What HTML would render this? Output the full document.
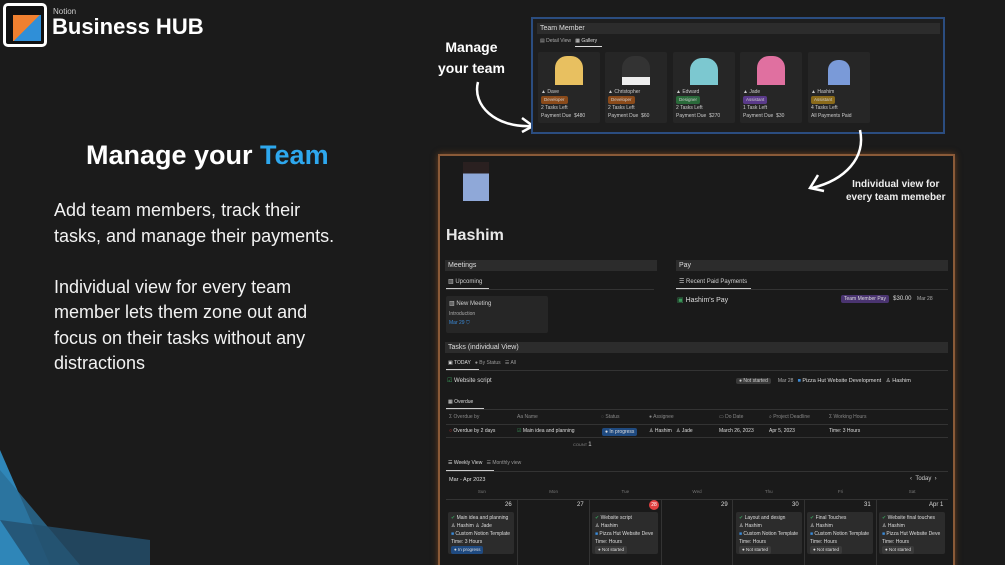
<!DOCTYPE html>
<html><head><meta charset="utf-8"><style>
*{margin:0;padding:0;box-sizing:border-box}
html{width:1005px;height:565px;overflow:hidden}
body{width:1005px;height:565px;background:#1b1b1b;overflow:hidden;position:relative;font-family:"Liberation Sans",sans-serif;color:#ddd}
.a{position:absolute;white-space:nowrap}
.s{font-size:6px;color:#cfcfcf}
.t{font-size:5px;color:#aaa}
.hdr{position:absolute;background:#2c2c2c;font-size:7px;color:#ddd;padding:2px 3px;height:11px}
.tag{display:inline-block;padding:0 3px;border-radius:2px;font-size:4.5px}
.card{position:absolute;background:#262626;border-radius:2px}
.ccard{position:absolute;background:#2c2c2c;border-radius:2px;width:66px;height:42px;font-size:5px;color:#ddd;padding:2px 3px;line-height:8px;overflow:hidden}
</style></head><body>

<svg class="a" style="left:0;top:430px" width="150" height="135" viewBox="0 0 150 135">
<polygon points="0,20 50,135 0,135" fill="#2f86b8"/>
<polygon points="0,40 80,135 0,135" fill="#2a6f98" opacity=".8"/>
<polygon points="0,90 150,110 150,135 0,135" fill="#24506e" opacity=".8"/>
<polygon points="0,90 30,135 0,135" fill="#2f86b8"/>
</svg>

<!-- logo -->
<div class="a" style="left:3px;top:3px;width:44px;height:44px;border:3px solid #fff;border-radius:5px;background:#111"></div>
<div class="a" style="left:13px;top:15px;width:28px;height:26px;background:linear-gradient(135deg,#f08030 50%,#2f8fd8 50%)"></div>
<div class="a" style="left:53px;top:7px;font-size:8px;color:#ccc">Notion</div>
<div class="a" style="left:52px;top:14px;font-size:22px;font-weight:bold;color:#fff">Business HUB</div>

<div class="a" style="left:86px;top:140px;font-size:27px;font-weight:bold;color:#fff">Manage your <span style="color:#2ea8ee">Team</span></div>
<div class="a" style="left:54px;top:198px;font-size:18px;line-height:25.5px;color:#f2f2f2;white-space:normal;width:290px">Add team members, track their tasks, and manage their payments.<br><br>Individual view for every team member lets them zone out and focus on their tasks without any distractions</div>

<!-- arrows text -->
<div class="a" style="left:438px;top:37px;font-size:14px;font-weight:bold;color:#fff;text-align:center;line-height:21px">Manage<br>your team</div>
<svg class="a" style="left:470px;top:80px" width="70" height="55"><path d="M8 2 C2 25 25 48 62 46" stroke="#fff" stroke-width="2.5" fill="none"/><path d="M52 38 L63 46 L52 52" stroke="#fff" stroke-width="2.5" fill="none"/></svg>

<!-- team panel -->
<div class="a" style="left:531px;top:17px;width:414px;height:117px;border:2px solid #2b4d80;background:#1e1e1e"></div>
<div class="hdr" style="left:537px;top:23px;width:403px">Team Member</div>
<div class="a t" style="left:540px;top:38px">▤ Detail View &nbsp;&nbsp;<span style="color:#ddd">▦ Gallery</span></div>
<div class="a" style="left:575px;top:46px;width:27px;height:1px;background:#ddd"></div>

<div class="card" style="left:538px;top:52px;width:62px;height:71px"></div>
<div class="card" style="left:605px;top:52px;width:62px;height:71px"></div>
<div class="card" style="left:673px;top:52px;width:62px;height:71px"></div>
<div class="card" style="left:740px;top:52px;width:62px;height:71px"></div>
<div class="card" style="left:808px;top:52px;width:62px;height:71px"></div>
<div class="a" style="left:555px;top:56px;width:28px;height:29px;border-radius:12px 12px 0 0;background:#e8c060"></div>
<div class="a" style="left:622px;top:56px;width:28px;height:29px;border-radius:12px 12px 0 0;background:#333;border-bottom:8px solid #eee"></div>
<div class="a" style="left:690px;top:58px;width:28px;height:27px;border-radius:12px 12px 0 0;background:#7cc8d0"></div>
<div class="a" style="left:757px;top:56px;width:28px;height:29px;border-radius:12px 12px 0 0;background:#e070a0"></div>
<div class="a" style="left:828px;top:60px;width:22px;height:25px;border-radius:10px 10px 0 0;background:#7a9ad8"></div>

<div class="a t" style="left:541px;top:88px;line-height:8px;color:#ccc">▲ Dave<br><span class="tag" style="background:#8a4a1a">Developer</span><br>2 Tasks Left<br>Payment Due &nbsp;$480</div>
<div class="a t" style="left:608px;top:88px;line-height:8px;color:#ccc">▲ Christopher<br><span class="tag" style="background:#8a4a1a">Developer</span><br>2 Tasks Left<br>Payment Due &nbsp;$60</div>
<div class="a t" style="left:676px;top:88px;line-height:8px;color:#ccc">▲ Edward<br><span class="tag" style="background:#2a6a3a">Designer</span><br>2 Tasks Left<br>Payment Due &nbsp;$270</div>
<div class="a t" style="left:743px;top:88px;line-height:8px;color:#ccc">▲ Jade<br><span class="tag" style="background:#5a3a8a">Assistant</span><br>1 Task Left<br>Payment Due &nbsp;$30</div>
<div class="a t" style="left:811px;top:88px;line-height:8px;color:#ccc">▲ Hashim<br><span class="tag" style="background:#8a6a1a">Assistant</span><br>4 Tasks Left<br>All Payments Paid</div>

<!-- big panel -->
<div class="a" style="left:438px;top:154px;width:517px;height:420px;border:2px solid #8a5a38;background:#1a1a1a;box-shadow:0 0 6px #6a4020"></div>
<svg class="a" style="left:800px;top:128px;z-index:5" width="70" height="70"><path d="M60 2 C66 30 45 52 12 60" stroke="#fff" stroke-width="2.5" fill="none"/><path d="M18 47 L10 60 L24 63" stroke="#fff" stroke-width="2.5" fill="none"/></svg>
<div class="a" style="left:463px;top:162px;width:26px;height:39px;background:linear-gradient(#2a2020 30%,#8fa8d8 30%)"></div>
<div class="a" style="left:846px;top:178px;font-size:10px;font-weight:bold;color:#eee;text-align:center;line-height:13px">Individual view for<br>every team memeber</div>
<div class="a" style="left:446px;top:227px;font-size:16px;font-weight:bold;color:#e8e8e8">Hashim</div>

<div class="hdr" style="left:445px;top:260px;width:212px">Meetings</div>
<div class="hdr" style="left:676px;top:260px;width:272px">Pay</div>
<div class="a s" style="left:448px;top:278px">▥ Upcoming</div>
<div class="a" style="left:446px;top:289px;width:208px;height:1px;background:#333"></div>
<div class="a" style="left:446px;top:288px;width:43px;height:1px;background:#ccc"></div>
<div class="a s" style="left:679px;top:278px">☰ Recent Paid Payments</div>
<div class="a" style="left:676px;top:289px;width:272px;height:1px;background:#333"></div>
<div class="a" style="left:676px;top:288px;width:75px;height:1px;background:#ccc"></div>
<div class="card" style="left:446px;top:296px;width:102px;height:37px;background:#262626"></div>
<div class="a s" style="left:449px;top:300px">▥ New Meeting</div>
<div class="a t" style="left:449px;top:311px">Introduction</div>
<div class="a t" style="left:449px;top:320px;color:#3a8ad8">Mar 29 ⛉</div>
<div class="a" style="left:677px;top:296px;font-size:7px;color:#ddd"><span style="color:#3a9a5a">▣</span> Hashim's Pay</div>
<div class="a t" style="left:841px;top:295px"><span class="tag" style="background:#4a3470;color:#ddd;font-size:5px;padding:1px 3px">Team Member Pay</span> &nbsp;&nbsp;<span style="color:#ddd;font-size:6px">$30.00</span> &nbsp;&nbsp;&nbsp;Mar 28</div>

<div class="hdr" style="left:445px;top:342px;width:503px">Tasks (individual View)</div>
<div class="a t" style="left:448px;top:360px;color:#ddd">▣ TODAY &nbsp;&nbsp;<span style="color:#999">● By Status &nbsp;&nbsp;☰ All</span></div>
<div class="a" style="left:446px;top:370px;width:502px;height:1px;background:#333"></div>
<div class="a" style="left:446px;top:369px;width:33px;height:1px;background:#ccc"></div>
<div class="a s" style="left:447px;top:377px;color:#ddd"><span style="color:#3a9a5a">☑</span> Website script</div>
<div class="a t" style="left:736px;top:378px"><span class="tag" style="background:#3a3a3a;color:#ccc;font-size:5px">● Not started</span> &nbsp;&nbsp;&nbsp;&nbsp;Mar 28 &nbsp;&nbsp;<span style="color:#ddd;font-size:5.5px"><span style="color:#3a8ad8">■</span> Pizza Hut Website Development &nbsp;&nbsp;♙ Hashim</span></div>

<div class="a t" style="left:448px;top:399px;color:#ddd">▦ Overdue</div>
<div class="a" style="left:446px;top:409px;width:502px;height:1px;background:#333"></div>
<div class="a" style="left:446px;top:408px;width:38px;height:1px;background:#ccc"></div>
<div class="a t" style="left:449px;top:414px;color:#888">Σ Overdue by</div>
<div class="a t" style="left:517px;top:414px;color:#888">Aa Name</div>
<div class="a t" style="left:601px;top:414px;color:#888">◌ Status</div>
<div class="a t" style="left:649px;top:414px;color:#888">● Assignee</div>
<div class="a t" style="left:719px;top:414px;color:#888">▭ Do Date</div>
<div class="a t" style="left:769px;top:414px;color:#888">⌕ Project Deadline</div>
<div class="a t" style="left:829px;top:414px;color:#888">Σ Working Hours</div>
<div class="a" style="left:446px;top:424px;width:502px;height:1px;background:#333"></div>
<div class="a t" style="left:449px;top:428px;color:#ddd"><span style="color:#e03030">○</span> Overdue by 2 days</div>
<div class="a t" style="left:517px;top:428px;color:#ddd"><span style="color:#3a9a5a">☑</span> Main idea and planning</div>
<div class="a t" style="left:602px;top:428px"><span class="tag" style="background:#1f4a80;color:#ddd;font-size:5px;padding:1px 3px">● In progress</span></div>
<div class="a t" style="left:649px;top:428px;color:#ddd">♙ Hashim &nbsp;&nbsp;♙ Jade</div>
<div class="a t" style="left:719px;top:428px;color:#ddd">March 26, 2023</div>
<div class="a t" style="left:769px;top:428px;color:#ddd">Apr 5, 2023</div>
<div class="a t" style="left:829px;top:428px;color:#ddd">Time: 3 Hours</div>
<div class="a" style="left:446px;top:437px;width:502px;height:1px;background:#333"></div>
<div class="a" style="left:573px;top:442px;font-size:4px;color:#888">COUNT <span style="font-size:6px;color:#ccc">1</span></div>

<div class="a t" style="left:448px;top:460px;color:#ddd">☰ Weekly View &nbsp;&nbsp;<span style="color:#999">☰ Monthly view</span></div>
<div class="a" style="left:446px;top:471px;width:502px;height:1px;background:#333"></div>
<div class="a" style="left:446px;top:470px;width:48px;height:1px;background:#ccc"></div>
<div class="a" style="left:449px;top:477px;font-size:5.5px;color:#ddd">Mar - Apr 2023</div>
<div class="a" style="left:910px;top:476px;font-size:6px;color:#ccc">‹ &nbsp;Today &nbsp;›</div>
<div class="a" style="left:446px;top:489px;width:502px;font-size:4.5px;color:#777;display:flex"><span style="flex:1;text-align:center">Sun</span><span style="flex:1;text-align:center">Mon</span><span style="flex:1;text-align:center">Tue</span><span style="flex:1;text-align:center">Wed</span><span style="flex:1;text-align:center">Thu</span><span style="flex:1;text-align:center">Fri</span><span style="flex:1;text-align:center">Sat</span></div>
<div class="a" style="left:446px;top:499px;width:502px;height:66px;border-top:1px solid #333;display:flex">
<div style="flex:1;border-right:1px solid #333"></div><div style="flex:1;border-right:1px solid #333"></div><div style="flex:1;border-right:1px solid #333"></div><div style="flex:1;border-right:1px solid #333"></div><div style="flex:1;border-right:1px solid #333"></div><div style="flex:1;border-right:1px solid #333"></div><div style="flex:1"></div></div>
<div class="a" style="left:505px;top:502px;font-size:6px;color:#ddd">26</div>
<div class="a" style="left:577px;top:502px;font-size:6px;color:#ddd">27</div>
<div class="a" style="left:649px;top:500px;width:10px;height:10px;border-radius:5px;background:#e04040;font-size:5px;color:#fff;text-align:center;line-height:10px">28</div>
<div class="a" style="left:721px;top:502px;font-size:6px;color:#ddd">29</div>
<div class="a" style="left:792px;top:502px;font-size:6px;color:#ddd">30</div>
<div class="a" style="left:864px;top:502px;font-size:6px;color:#ddd">31</div>
<div class="a" style="left:929px;top:502px;font-size:6px;color:#ddd">Apr 1</div>

<div class="ccard" style="left:448px;top:512px"><span style="color:#3a9a5a">✔</span> Main idea and planning<br>♙ Hashim ♙ Jade<br><span style="color:#3a8ad8">■</span> Custom Notion Template<br>Time: 3 Hours<br><span class="tag" style="background:#1f4a80">● In progress</span></div>
<div class="ccard" style="left:592px;top:512px"><span style="color:#3a9a5a">✔</span> Website script<br>♙ Hashim<br><span style="color:#3a8ad8">■</span> Pizza Hut Website Deve<br>Time: Hours<br><span class="tag" style="background:#3a3a3a">● Not started</span></div>
<div class="ccard" style="left:736px;top:512px"><span style="color:#3a9a5a">✔</span> Layout and design<br>♙ Hashim<br><span style="color:#3a8ad8">■</span> Custom Notion Template<br>Time: Hours<br><span class="tag" style="background:#3a3a3a">● Not started</span></div>
<div class="ccard" style="left:807px;top:512px"><span style="color:#3a9a5a">✔</span> Final Touches<br>♙ Hashim<br><span style="color:#3a8ad8">■</span> Custom Notion Template<br>Time: Hours<br><span class="tag" style="background:#3a3a3a">● Not started</span></div>
<div class="ccard" style="left:879px;top:512px"><span style="color:#3a9a5a">✔</span> Website final touches<br>♙ Hashim<br><span style="color:#3a8ad8">■</span> Pizza Hut Website Deve<br>Time: Hours<br><span class="tag" style="background:#3a3a3a">● Not started</span></div>
</body></html>
